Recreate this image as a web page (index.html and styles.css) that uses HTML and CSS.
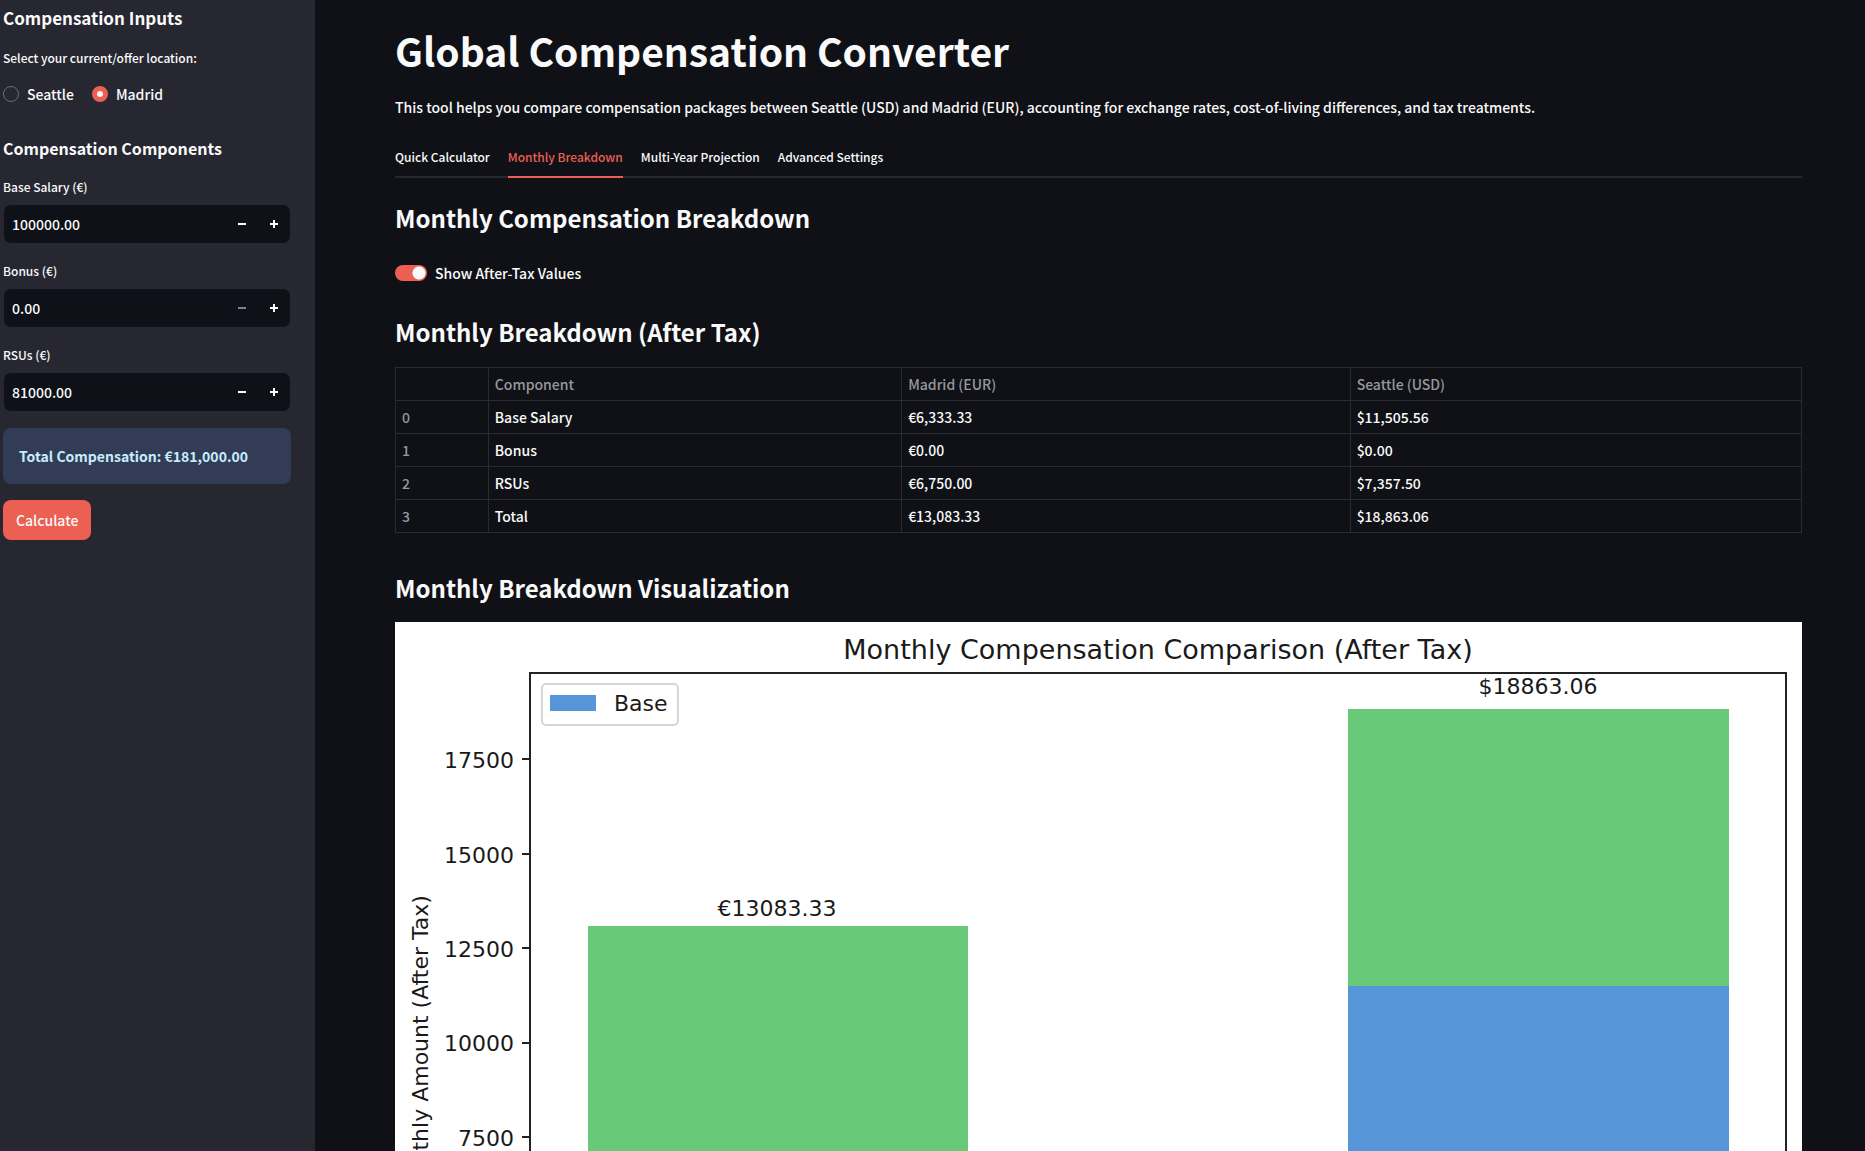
FILE: index.html
```html
<!DOCTYPE html>
<html lang="en">
<head>
<meta charset="utf-8">
<title>Global Compensation Converter</title>
<meta name="viewport" content="width=device-width, initial-scale=1">
<link rel="stylesheet" href="styles.css">
</head>
<body>
<div class="app">
  <aside class="sidebar">
    <h2 class="sidebar-title">Compensation Inputs</h2>
    <fieldset class="location">
      <legend class="field-label">Select your current/offer location:</legend>
      <div class="radio-row">
        <label class="radio"><input type="radio" name="location">Seattle</label>
        <label class="radio"><input type="radio" name="location" checked>Madrid</label>
      </div>
    </fieldset>
    <h3 class="sidebar-subtitle">Compensation Components</h3>
    <div class="fields">
      <div class="field">
        <label class="field-label" for="base">Base Salary (€)</label>
        <div class="number">
          <input id="base" type="text" inputmode="decimal" value="100000.00">
          <button type="button" aria-label="Decrease base salary"><svg viewBox="0 0 8 8"><path d="M0 3h8v2H0z"/></svg></button>
          <button type="button" aria-label="Increase base salary"><svg viewBox="0 0 8 8"><path d="M3 0h2v3h3v2H5v3H3V5H0V3h3z"/></svg></button>
        </div>
      </div>
      <div class="field">
        <label class="field-label" for="bonus">Bonus (€)</label>
        <div class="number">
          <input id="bonus" type="text" inputmode="decimal" value="0.00">
          <button type="button" disabled aria-label="Decrease bonus"><svg viewBox="0 0 8 8"><path d="M0 3h8v2H0z"/></svg></button>
          <button type="button" aria-label="Increase bonus"><svg viewBox="0 0 8 8"><path d="M3 0h2v3h3v2H5v3H3V5H0V3h3z"/></svg></button>
        </div>
      </div>
      <div class="field">
        <label class="field-label" for="rsus">RSUs (€)</label>
        <div class="number">
          <input id="rsus" type="text" inputmode="decimal" value="81000.00">
          <button type="button" aria-label="Decrease RSUs"><svg viewBox="0 0 8 8"><path d="M0 3h8v2H0z"/></svg></button>
          <button type="button" aria-label="Increase RSUs"><svg viewBox="0 0 8 8"><path d="M3 0h2v3h3v2H5v3H3V5H0V3h3z"/></svg></button>
        </div>
      </div>
    </div>
    <p class="total">Total Compensation: €181,000.00</p>
    <button class="calculate" type="button">Calculate</button>
  </aside>

  <main class="main">
    <h1 class="title">Global Compensation Converter</h1>
    <p class="intro">This tool helps you compare compensation packages between Seattle (USD) and Madrid (EUR), accounting for exchange rates, cost-of-living differences, and tax treatments.</p>
    <div class="tabs" role="tablist">
      <button class="tab" type="button" role="tab" aria-selected="false">Quick Calculator</button>
      <button class="tab" type="button" role="tab" aria-selected="true">Monthly Breakdown</button>
      <button class="tab" type="button" role="tab" aria-selected="false">Multi-Year Projection</button>
      <button class="tab" type="button" role="tab" aria-selected="false">Advanced Settings</button>
    </div>
    <h2 class="heading">Monthly Compensation Breakdown</h2>
    <label class="toggle"><input type="checkbox" role="switch" checked>Show After-Tax Values</label>
    <h2 class="heading">Monthly Breakdown (After Tax)</h2>
    <table class="breakdown">
      <colgroup><col class="col-index"><col class="col-name"><col class="col-madrid"><col></colgroup>
      <thead>
        <tr><td></td><th scope="col">Component</th><th scope="col">Madrid (EUR)</th><th scope="col">Seattle (USD)</th></tr>
      </thead>
      <tbody>
        <tr><th scope="row">0</th><td>Base Salary</td><td>€6,333.33</td><td>$11,505.56</td></tr>
        <tr><th scope="row">1</th><td>Bonus</td><td>€0.00</td><td>$0.00</td></tr>
        <tr><th scope="row">2</th><td>RSUs</td><td>€6,750.00</td><td>$7,357.50</td></tr>
        <tr><th scope="row">3</th><td>Total</td><td>€13,083.33</td><td>$18,863.06</td></tr>
      </tbody>
    </table>
    <h2 class="heading heading-chart">Monthly Breakdown Visualization</h2>
    <svg class="chart" viewBox="0 0 1407 844" role="img" aria-label="Monthly Compensation Comparison (After Tax)">
      <g class="base"><rect x="193" y="560" width="380" height="239"/><rect x="953" y="364" width="381" height="435"/></g>
      <g class="rsu"><rect x="193" y="304" width="380" height="256"/><rect x="953" y="87" width="381" height="277"/></g>
      <g class="axes">
        <rect x="135" y="51" width="1256" height="748"/>
        <path d="M127 137h8M127 232h8M127 326h8M127 421h8M127 515h8M127 610h8M127 704h8M127 799h8M383 799v8M1143 799v8"/>
      </g>
      <g class="ticks">
        <text x="119" y="146">17500</text>
        <text x="119" y="241">15000</text>
        <text x="119" y="335">12500</text>
        <text x="119" y="429">10000</text>
        <text x="119" y="524">7500</text>
        <text x="119" y="618">5000</text>
        <text x="119" y="712">2500</text>
        <text x="119" y="807">0</text>
      </g>
      <g class="labels">
        <text x="382" y="294">€13083.33</text>
        <text x="1143" y="72">$18863.06</text>
        <text x="382" y="830">Madrid</text>
        <text x="1143" y="830">Seattle</text>
        <text transform="translate(33 424) rotate(-90)">Monthly Amount (After Tax)</text>
      </g>
      <text class="chart-title" x="763" y="37">Monthly Compensation Comparison (After Tax)</text>
      <rect class="legend-box" x="147" y="62" width="136" height="41" rx="4"/>
      <g class="base"><rect x="155" y="73" width="46" height="16"/></g>
      <text class="legend-text" x="219" y="89">Base</text>
    </svg>
  </main>
</div>
</body>
</html>
```

FILE: styles.css
```css
* { box-sizing: border-box; }

body {
  margin: 0;
  background: #0f1116;
  color: #fafafa;
  font: 500 14px/24px "Noto Sans CJK SC", "Noto Sans", sans-serif;
}

h1, h2, h3, p { margin: 0; }

button, input { font: inherit; color: inherit; }

button { cursor: pointer; }

.app { display: flex; height: 100vh; }

/* Sidebar */
.sidebar {
  flex: 0 0 315px;
  padding: 6px 24px 24px 3px;
  background: #262730;
  overflow-y: auto;
  scrollbar-width: none;
}

.sidebar-title { font-size: 17px; line-height: 24px; font-weight: 700; }

.sidebar-subtitle { margin-top: 30px; font-size: 16px; line-height: 24px; font-weight: 700; }

.location { margin: 18px 0 0; padding: 0; border: 0; }

.field-label { display: block; padding: 0; font-size: 12px; line-height: 20px; }

.radio-row { display: flex; gap: 18px; margin-top: 14px; }

.radio { display: flex; align-items: center; gap: 8px; }

.radio input {
  appearance: none;
  width: 16px;
  height: 16px;
  margin: 0;
  border: 1px solid #6b6c76;
  border-radius: 50%;
}

.radio input:checked { border: 5px solid #ec6053; background: #f3f0fa; }

.fields { display: flex; flex-direction: column; gap: 17px; margin-top: 17px; }

.number {
  display: flex;
  height: 40px;
  margin-top: 7px;
  border: 1px solid #262730;
  border-radius: 8px;
  background: #0e1117;
  overflow: hidden;
}

.number input {
  flex: 1;
  min-width: 0;
  padding: 0 8px;
  border: 0;
  background: none;
}

.number button {
  display: grid;
  place-items: center;
  width: 32px;
  padding: 0;
  border: 0;
  background: none;
}

.number button:disabled { color: #7f808e; }

.number svg { width: 8px; height: 8px; fill: currentColor; }

.total {
  margin-top: 16px;
  padding: 16px;
  border-radius: 8px;
  background: #323d55;
  color: #c7ebff;
  font-weight: 700;
}

.calculate {
  height: 40px;
  margin-top: 16px;
  padding: 0 13px;
  border: 0;
  border-radius: 8px;
  background: #ec6053;
}

/* Main column */
.main {
  flex: 1;
  min-width: 0;
  padding: 24px 63px 80px 80px;
  overflow-y: auto;
  scrollbar-width: none;
}

.title { font-size: 39px; line-height: 52px; font-weight: 700; }

.intro { margin-top: 19px; }

.tabs {
  display: flex;
  gap: 18px;
  margin-top: 18px;
  box-shadow: inset 0 -2px #262730;
}

.tab {
  height: 41px;
  padding: 0;
  border: 0;
  border-bottom: 2px solid transparent;
  background: none;
  font-size: 12px;
}

.tab[aria-selected="true"] { border-color: #ec6053; color: #ec6053; }

.heading { margin-top: 23px; font-size: 24px; line-height: 34px; font-weight: 700; }

.toggle { display: flex; align-items: center; gap: 8px; margin: 26px 0 30px; }

.toggle input {
  appearance: none;
  width: 32px;
  height: 16px;
  margin: 0;
  border-radius: 8px;
  background: radial-gradient(circle at 24px 8px, #fafafa 6px, #ec6053 7px);
}

.breakdown {
  width: 100%;
  margin-top: 18px;
  border-collapse: collapse;
  table-layout: fixed;
}

.col-index { width: 6.6%; }
.col-name { width: 29.4%; }
.col-madrid { width: 31.9%; }

.breakdown th,
.breakdown td {
  height: 33px;
  padding: 0 6px;
  border: 1px solid #2a2c32;
  text-align: left;
}

.breakdown th { color: #97989c; font-weight: 500; }

.heading-chart { margin-top: 38px; }

/* Chart */
.chart {
  display: block;
  width: 100%;
  margin-top: 17px;
  background: #fff;
  fill: #1a1a1a;
  font: 22px "DejaVu Sans", sans-serif;
}

.base { fill: #5795d9; }
.rsu { fill: #68c978; }
.axes { fill: none; stroke: #222; stroke-width: 2px; }
.ticks { text-anchor: end; }
.labels, .chart-title { text-anchor: middle; }
.chart-title { font-size: 27px; }
.legend-box { fill: #fff; stroke: #d6d6d6; stroke-width: 2px; }
```
